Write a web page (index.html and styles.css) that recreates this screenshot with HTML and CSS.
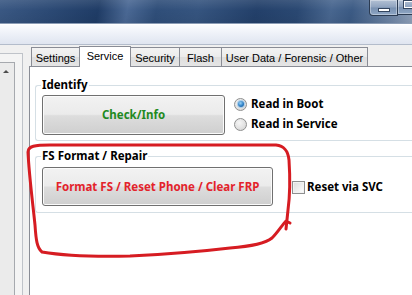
FILE: index.html
```html
<!DOCTYPE html>
<html>
<head>
<meta charset="utf-8">
<link rel="stylesheet" href="styles.css">
</head>
<body>
<div class="window">
  <div class="titlebar">
    <div class="capbtns">
      <div class="capbtn min"><span class="dash"></span></div>
      <div class="capbtn max"><span class="sq"></span></div>
    </div>
  </div>
  <div class="band"></div>
  <div class="client">
    <div class="side">
      <div class="frame">
        <div class="list"><span class="arrow"></span></div>
      </div>
    </div>
    <div class="tabctl">
      <div class="tabrow">
        <div class="tab t-settings">Settings</div>
        <div class="tab t-service active">Service</div>
        <div class="tab t-security">Security</div>
        <div class="tab t-flash">Flash</div>
        <div class="tab t-user">User Data / Forensic / Other</div>
      </div>
      <div class="page">
        <fieldset class="group g-identify">
          <legend>Identify</legend>
          <div class="grow">
            <button class="btn btn-check">Check/Info</button>
            <div class="radios">
              <label class="opt"><span class="radio on"></span>Read in Boot</label>
              <label class="opt"><span class="radio"></span>Read in Service</label>
            </div>
          </div>
        </fieldset>
        <fieldset class="group g-fs">
          <legend>FS Format / Repair</legend>
          <div class="grow">
            <button class="btn btn-fs">Format FS / Reset Phone / Clear FRP</button>
            <label class="opt chk"><span class="checkbox"></span>Reset via SVC</label>
          </div>
        </fieldset>
      </div>
    </div>
  </div>
  <svg class="scribble" width="412" height="295" viewBox="0 0 412 295">
    <path d="M 286 229 L 288 210 C 290 195, 290 175, 289 160 C 288 150, 284 146, 276 145 L 210 145 L 50 145 C 35 145, 28 146, 28 152 C 29 175, 33 205, 35 225 C 36 240, 37 248, 42 252 C 60 255, 90 257, 130 256 C 170 254, 205 251, 230 248 C 255 246, 266 243, 272 238 C 278 232, 282 225, 286 221 L 290 223" />
  </svg>
</div>
</body>
</html>
```
FILE: styles.css
```css
html, body {
  margin: 0;
  padding: 0;
}
body {
  width: 412px;
  height: 295px;
  overflow: hidden;
  background: #f0f0f0;
  font-family: "Liberation Sans", Arial, sans-serif;
  font-size: 11px;
  color: #000;
}
.window {
  position: relative;
  width: 412px;
  height: 295px;
  overflow: hidden;
}
.titlebar {
  height: 23px;
  display: flex;
  justify-content: flex-end;
  background:
    linear-gradient(180deg, rgba(255,255,255,0.10) 0%, rgba(255,255,255,0) 45%, rgba(0,0,0,0.05) 100%),
    linear-gradient(100deg, #3a5883 0%, #2c4a75 12%, #1f3c66 24%, #4a6894 31%, #2f4e79 38%, #35547f 48%, #23406a 62%, #2a4872 72%, #48668f 80%, #3b5a84 85%, #6f86a6 95%, #8ea0b9 100%);
  border-bottom: 1px solid #8b9cb5;
}
.capbtns {
  display: flex;
  margin-right: -12px;
  height: 16px;
}
.capbtn {
  height: 15px;
  border: 1px solid #2b3b52;
  border-top: none;
  background: linear-gradient(180deg, #b3c1d4 0%, #8fa3bf 48%, #7890b0 52%, #8ea6c4 100%);
  box-shadow: inset 0 0 0 1px rgba(255,255,255,0.35);
  display: flex;
  align-items: center;
  justify-content: center;
}
.capbtn.min {
  width: 27px;
  border-bottom-left-radius: 4px;
}
.capbtn.max {
  width: 26px;
  border-left: none;
  justify-content: flex-start;
  padding-left: 6px;
  box-sizing: border-box;
}
.dash {
  width: 10px;
  height: 2px;
  background: #fff;
  border: 1px solid #33455f;
  margin-top: 4px;
}
.sq {
  width: 7px;
  height: 5px;
  border: 1px solid #fff;
  outline: 1px solid #33455f;
  margin-top: -5px;
}
.band {
  height: 19px;
  border-top: 1px solid #ffffff;
  border-bottom: 1px solid #b3bccb;
  background: linear-gradient(180deg, #fbfcfe 0%, #eef1f8 45%, #dfe5f0 100%);
}
.client {
  display: flex;
  height: 250px;
}
.side {
  width: 29px;
  flex-shrink: 0;
  background: #f0f0f0;
}
.frame {
  margin-top: 8px;
  width: 22px;
  height: 260px;
  border-top: 1px solid #bfc3c9;
  border-right: 1px solid #bfc3c9;
  background: #f4f4f4;
}
.list {
  margin-top: 8px;
  width: 15px;
  height: 240px;
  border-top: 1px solid #a6a9ae;
  border-right: 1px solid #a6a9ae;
  background: #ebebeb;
  display: flex;
  justify-content: center;
  padding-top: 7px;
  box-sizing: border-box;
}
.arrow {
  width: 0;
  height: 0;
  border-left: 3px solid transparent;
  border-right: 3px solid transparent;
  border-bottom: 3px solid #4d4d4d;
  margin-left: -2px;
}
.tabctl {
  flex: 1;
  min-width: 400px;
  display: flex;
  flex-direction: column;
}
.tabrow {
  display: flex;
  align-items: flex-end;
  height: 20px;
  margin-top: 1px;
  padding-left: 2px;
  position: relative;
  z-index: 1;
}
.tab {
  height: 17px;
  box-sizing: content-box;
  border: 1px solid #898c95;
  border-bottom: none;
  background: linear-gradient(180deg, #f3f3f3 0%, #ebebeb 50%, #dedede 52%, #e5e5e5 100%);
  display: flex;
  align-items: center;
  justify-content: center;
  white-space: nowrap;
  margin-left: -1px;
  padding-top: 1px;
}
.t-settings { width: 47px; margin-left: 0; }
.t-service  { width: 50px; }
.t-security { width: 48px; }
.t-flash    { width: 41px; }
.t-user     { width: 145px; }
.tab.active {
  margin-bottom: -1px;
  background: #ffffff;
  padding-top: 0;
  padding-bottom: 2px;
  height: 18px;
  position: relative;
  z-index: 2;
}
.page {
  flex: 1;
  border-top: 1px solid #898c95;
  border-left: 1px solid #898c95;
  background: #ffffff;
  padding-left: 5px;
}
.group {
  border: 1px solid #d5dfe5;
  border-right: none;
  border-radius: 3px 0 0 3px;
  margin: 0;
  padding: 0 0 0 6px;
  min-width: 0;
}
.group legend {
  font-family: "Noto Sans", sans-serif;
  font-weight: bold;
  font-size: 11.5px;
  line-height: 12px;
  padding: 0 1px;
  margin-left: -1px;
  color: #000;
}
.g-identify {
  margin-top: 12px;
  padding-top: 4px;
  padding-bottom: 5px;
}
.g-fs {
  margin-top: 9px;
  padding-top: 5px;
  padding-bottom: 6px;
}
.grow {
  display: flex;
  align-items: center;
}
.btn {
  font-family: "Noto Sans", sans-serif;
  font-weight: bold;
  font-size: 11.5px;
  line-height: 14px;
  border: 1px solid #707070;
  border-radius: 3px;
  background: linear-gradient(180deg, #f2f2f2 0%, #ebebeb 48%, #dddddd 52%, #cfcfcf 100%);
  box-shadow: inset 0 0 0 1px #fbfbfb;
  padding: 0;
  margin: 0;
}
.btn-check {
  width: 183px;
  height: 40px;
  color: #1f8a1f;
}
.btn-fs {
  width: 231px;
  height: 39px;
  color: #e3232b;
}
.radios {
  display: flex;
  flex-direction: column;
  margin-left: 9px;
  margin-top: -2px;
}
.opt {
  display: flex;
  align-items: center;
  height: 20px;
  font-family: "Noto Sans", sans-serif;
  font-weight: bold;
  font-size: 11.5px;
  line-height: 14px;
  white-space: nowrap;
}
.radio {
  width: 11px;
  height: 11px;
  border: 1px solid #8e8f8f;
  border-radius: 50%;
  background: radial-gradient(circle at 40% 35%, #f6f6f6 0%, #e0e0e0 60%, #cfcfcf 100%);
  margin-right: 4px;
  display: flex;
  align-items: center;
  justify-content: center;
  box-sizing: content-box;
}
.radio.on::after {
  content: "";
  width: 6px;
  height: 6px;
  border-radius: 50%;
  background: radial-gradient(circle at 40% 35%, #9bd2f6 0%, #2b7fc6 55%, #1b4f8a 100%);
  box-shadow: 0 0 0 1px #a9cde9;
}
.chk {
  margin-left: 19px;
  margin-top: 1px;
}
.checkbox {
  width: 11px;
  height: 11px;
  border: 1px solid #8e8f8f;
  background: linear-gradient(135deg, #dcdcdc 0%, #f4f4f4 70%, #ffffff 100%);
  box-shadow: inset 0 0 0 1px #f2f2f2;
  margin-right: 2px;
}
.scribble {
  position: absolute;
  left: 0;
  top: 0;
  pointer-events: none;
}
.scribble path {
  fill: none;
  stroke: #d61c22;
  stroke-width: 3;
  stroke-linecap: round;
  stroke-linejoin: round;
}
```
